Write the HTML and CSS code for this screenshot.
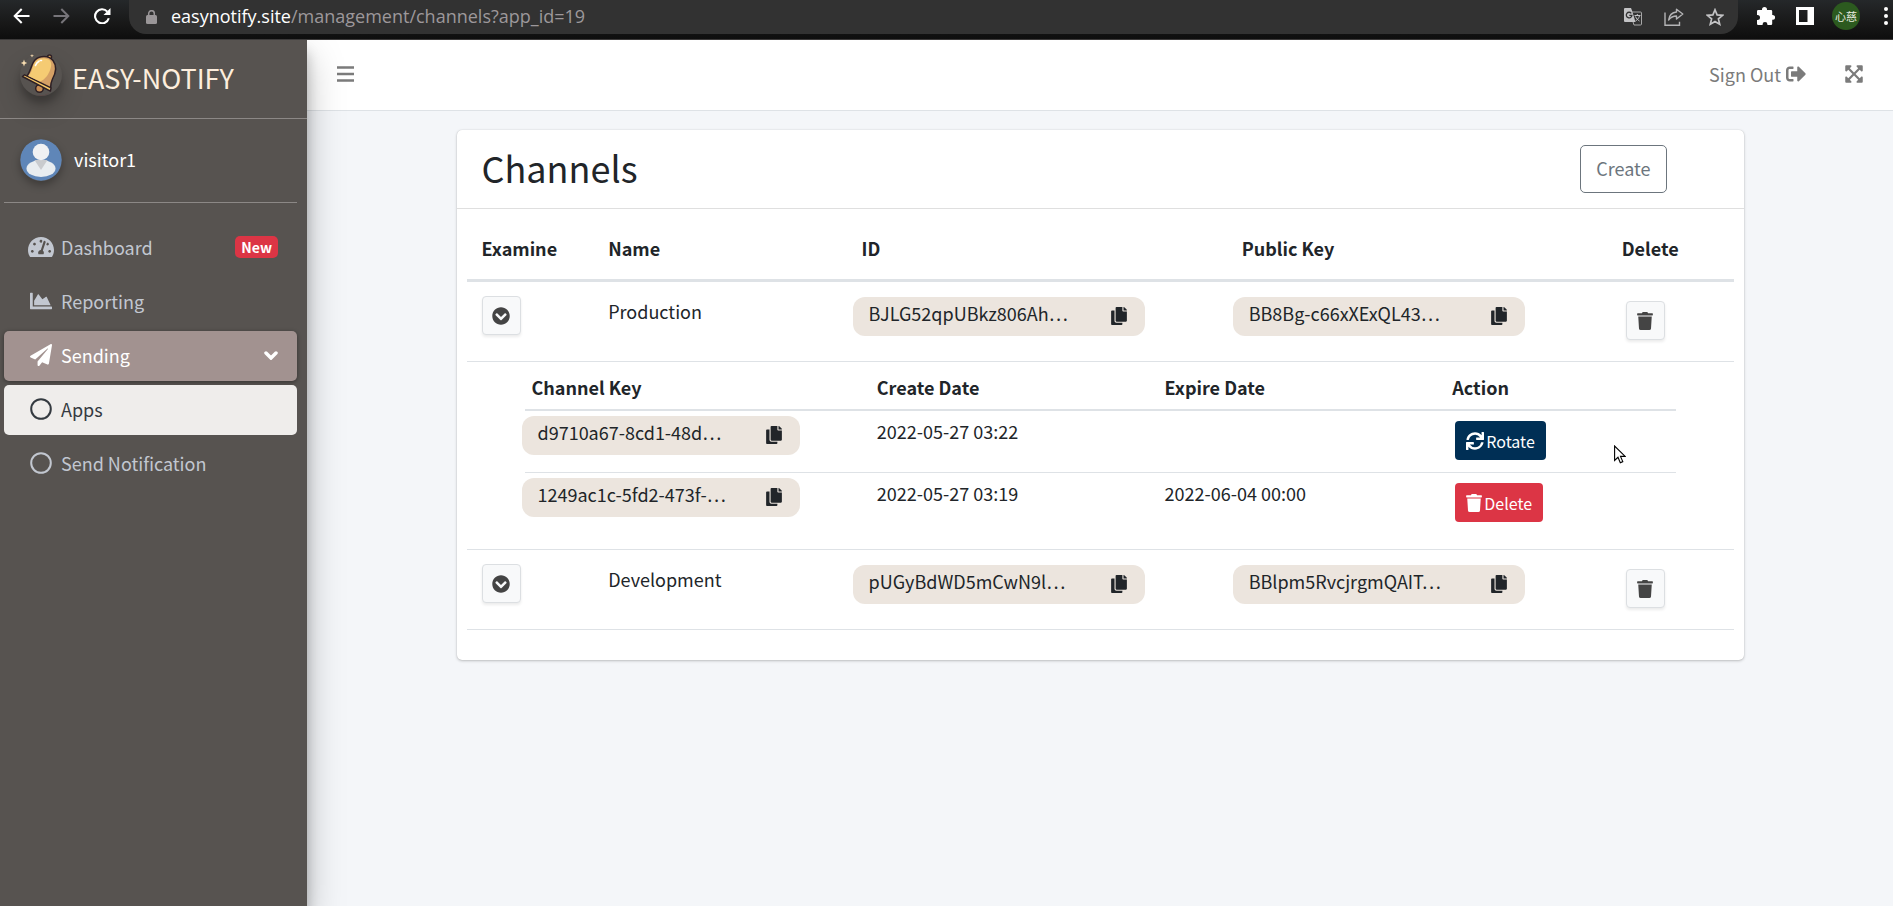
FILE: index.html
```html
<!DOCTYPE html>
<html lang="en">
<head>
<meta charset="utf-8">
<title>Channels - Easy-Notify</title>
<link rel="stylesheet" href="styles.css">
</head>
<body>
<svg class="sprite" aria-hidden="true">
  <symbol id="i-dash" viewBox="0 0 576 512"><path d="M288 32C128.94 32 0 160.94 0 320c0 52.8 14.25 102.26 39.06 144.8 5.61 9.62 16.3 15.2 27.44 15.2h443c11.14 0 21.83-5.58 27.44-15.2C561.75 422.26 576 372.8 576 320c0-159.06-128.94-288-288-288zm0 64c14.71 0 26.58 10.13 30.32 23.65-1.11 2.26-2.64 4.23-3.45 6.67l-9.22 27.67c-5.13 3.49-10.97 6.01-17.64 6.01-17.67 0-32-14.33-32-32S270.33 96 288 96zM96 384c-17.67 0-32-14.33-32-32s14.33-32 32-32 32 14.33 32 32-14.33 32-32 32zm48-160c-17.67 0-32-14.33-32-32s14.33-32 32-32 32 14.33 32 32-14.33 32-32 32zm246.77-72.41l-61.33 184C343.13 347.33 352 364.54 352 384c0 11.72-3.38 22.55-8.88 32H232.88c-5.5-9.45-8.88-20.28-8.88-32 0-33.94 26.5-61.43 59.9-63.59l61.34-184.01c4.17-12.56 17.73-19.45 30.36-15.17 12.57 4.19 19.35 17.79 15.17 30.36zm14.66 57.2l15.52-46.55c3.47-1.29 7.13-2.23 11.05-2.23 17.67 0 32 14.33 32 32s-14.33 32-32 32c-11.38-.01-20.89-6.28-26.57-15.22zM480 384c-17.67 0-32-14.33-32-32s14.33-32 32-32 32 14.33 32 32-14.33 32-32 32z"/></symbol>
  <symbol id="i-area" viewBox="0 0 512 512"><path d="M500 384c6.6 0 12 5.4 12 12v40c0 6.6-5.4 12-12 12H12c-6.6 0-12-5.4-12-12V76c0-6.6 5.4-12 12-12h40c6.6 0 12 5.4 12 12v308h436zM372.7 159.5L288 216l-85.3-113.7c-5.1-6.8-15.5-6.3-19.9 1L96 248v104h384l-89.9-187.8c-3.2-6.5-11.4-8.7-17.4-4.7z"/></symbol>
  <symbol id="i-plane" viewBox="0 0 512 512"><path d="M476 3.2L12.5 270.6c-18.1 10.4-15.8 35.6 2.2 43.2L121 358.4l287.3-253.2c5.5-4.9 13.3 2.6 8.6 8.3L176 407v80.5c0 23.6 28.5 32.9 42.5 15.8L282 426l124.6 52.2c14.2 6 30.4-2.9 33-18.2l72-432C515 7.8 493.3-6.8 476 3.2z"/></symbol>
  <symbol id="i-circle" viewBox="0 0 22 22"><circle cx="11" cy="11" r="9.8" fill="none" stroke="currentColor" stroke-width="2"/></symbol>
  <symbol id="i-down" viewBox="0 0 512 512"><path d="M504 256c0 137-111 248-248 248S8 393 8 256 119 8 256 8s248 111 248 248zM273 369.9l135.5-135.5c9.4-9.4 9.4-24.6 0-33.9l-17-17c-9.4-9.4-24.6-9.4-33.9 0L256 285.1 154.4 183.5c-9.4-9.4-24.6-9.4-33.9 0l-17 17c-9.4 9.4-9.4 24.6 0 33.9L239 369.9c9.4 9.4 24.6 9.4 34 0z"/></symbol>
  <symbol id="i-copy" viewBox="0 0 448 512"><path d="M320 448v40c0 13.255-10.745 24-24 24H24c-13.255 0-24-10.745-24-24V120c0-13.255 10.745-24 24-24h72v296c0 30.879 25.121 56 56 56h168zm0-344V0H152c-13.255 0-24 10.745-24 24v368c0 13.255 10.745 24 24 24h272c13.255 0 24-10.745 24-24V128H344c-13.2 0-24-10.8-24-24zm120.971-31.029L375.029 7.029A24 24 0 0 0 358.059 0H352v96h96v-6.059a24 24 0 0 0-7.029-16.97z"/></symbol>
  <symbol id="i-trash" viewBox="0 0 448 512"><path d="M432 32H312l-9.4-18.7A24 24 0 0 0 281.1 0H166.8a23.72 23.72 0 0 0-21.4 13.3L136 32H16A16 16 0 0 0 0 48v32a16 16 0 0 0 16 16h416a16 16 0 0 0 16-16V48a16 16 0 0 0-16-16zM53.2 467a48 48 0 0 0 47.9 45h245.8a48 48 0 0 0 47.9-45L416 128H32z"/></symbol>
  <symbol id="i-signout" viewBox="0 0 512 512"><path d="M497 273L329 441c-15 15-41 4.5-41-17v-96H152c-13.3 0-24-10.7-24-24v-96c0-13.3 10.7-24 24-24h136V88c0-21.4 25.9-32 41-17l168 168c9.3 9.4 9.3 24.6 0 34zM192 436v-40c0-6.6-5.4-12-12-12H96c-17.7 0-32-14.3-32-32V160c0-17.7 14.3-32 32-32h84c6.6 0 12-5.4 12-12V76c0-6.6-5.4-12-12-12H96c-53 0-96 43-96 96v192c0 53 43 96 96 96h84c6.6 0 12-5.4 12-12z"/></symbol>
  <symbol id="i-expand" viewBox="0 0 448 512"><path d="M448 344v112a23.94 23.94 0 0 1-24 24H312c-21.39 0-32.09-25.9-17-41l36.2-36.2L224 295.6 116.77 402.9 153 439c15.09 15.1 4.39 41-17 41H24a23.94 23.94 0 0 1-24-24V344c0-21.4 25.89-32.1 41-17l36.19 36.2L184.46 256 77.18 148.7 41 185c-15.1 15.1-41 4.4-41-17V56a23.94 23.94 0 0 1 24-24h112c21.39 0 32.09 25.9 17 41l-36.2 36.2L224 216.4l107.23-107.3L295 73c-15.09-15.1-4.39-41 17-41h112a23.94 23.94 0 0 1 24 24v112c0 21.4-25.89 32.1-41 17l-36.19-36.2L263.54 256l107.28 107.3L407 327.1c15.1-15.2 41-4.5 41 16.9z"/></symbol>
  <symbol id="i-sync" viewBox="0 0 512 512"><path d="M440.65 12.57l4 82.77A247.16 247.16 0 0 0 255.83 8C134.73 8 33.91 94.92 12.29 209.82A12 12 0 0 0 24.09 224h49.05a12 12 0 0 0 11.67-9.26 175.91 175.91 0 0 1 317-56.94l-101.46-4.86a12 12 0 0 0-12.57 12v47.41a12 12 0 0 0 12 12H500a12 12 0 0 0 12-12V12a12 12 0 0 0-12-12h-47.37a12 12 0 0 0-11.98 12.57zM255.83 432a175.61 175.61 0 0 1-146-77.8l101.8 4.87a12 12 0 0 0 12.57-12v-47.4a12 12 0 0 0-12-12H12a12 12 0 0 0-12 12V500a12 12 0 0 0 12 12h47.35a12 12 0 0 0 12-12.6l-4.15-82.57A247.17 247.17 0 0 0 255.83 504c121.11 0 221.93-86.92 243.55-201.82a12 12 0 0 0-11.8-14.18h-49.05a12 12 0 0 0-11.67 9.26A175.86 175.86 0 0 1 255.83 432z"/></symbol>
</svg>

<header class="chrome">
  <div class="chrome-nav">
    <button class="chrome-btn" aria-label="Back"><svg width="17" height="16" viewBox="0 0 17 16"><path d="M16.500 8H2M8.700 1L1.700 8l7 7" fill="none" stroke="#fff" stroke-width="2"/></svg></button>
    <button class="chrome-btn" aria-label="Forward"><svg width="17" height="16" viewBox="0 0 17 16"><path d="M.5 8H15M8.300 1l7 7-7 7" fill="none" stroke="#77757a" stroke-width="2"/></svg></button>
    <button class="chrome-btn" aria-label="Reload"><svg width="18" height="16" viewBox="0 0 18 16"><path d="M15.800 10.300A7 7 0 1 1 14.300 3.600" fill="none" stroke="#fff" stroke-width="2.100"/><path d="M17.500 0v7h-7z" fill="#fff"/></svg></button>
  </div>
  <div class="omnibox">
    <svg class="lock" width="11" height="14" viewBox="0 0 11 14"><rect y="5" width="11" height="9" rx="1.500" fill="#9a9698"/><path d="M2.700 6V3.500a2.800 2.800 0 0 1 5.600 0V6" fill="none" stroke="#9a9698" stroke-width="1.500"/></svg>
    <span class="url"><span class="host">easynotify.site</span>/management/channels?app_id=19</span>
    <div class="omni-icons">
      <svg width="18" height="18" viewBox="0 0 18 18"><path d="M6 4h10.500q1 0 1 1v11q0 1-1 1H10L6 4z" fill="none" stroke="#a8a8a8" stroke-width="1"/><path d="M1 0h6l1 2.500 3.500 11.500H1q-1 0-1-1V1q0-1 1-1z" fill="#c3c3c5"/><path d="M7.300 5.300A2.800 2.800 0 1 0 7.900 7.400H5.300" fill="none" stroke="#333" stroke-width="1.300"/><path d="M10.500 7.500h6M13.300 6v1.500M15.500 7.800c-.6 2.400-2 4-4 5.200M11.500 8.500c.8 2 2.200 3.500 4 4.500" fill="none" stroke="#c3c3c5" stroke-width="1"/></svg>
      <svg width="20" height="18" viewBox="0 0 20 18"><g fill="none" stroke="#b4b4b6" stroke-width="1.400"><path d="M1 4.500v12.800h14.500v-3.500"/><path d="M12.500 1.200L18.800 6l-6.300 5V8C8.500 8 6.500 9.500 4.600 12 5.200 7.500 8 4.500 12.500 4z" stroke-linejoin="round"/></g></svg>
      <svg width="18" height="18" viewBox="0 0 18 18"><path d="M9 1.800l2.100 5.100 5.500.4-4.200 3.600 1.300 5.300L9 13.400l-4.700 2.800 1.300-5.300L1.400 7.300l5.500-.4z" fill="none" stroke="#c3c3c5" stroke-width="1.700"/></svg>
    </div>
  </div>
  <div class="chrome-tools">
    <svg width="19" height="18" viewBox="0 0 19 18"><path d="M6 3V2.500a2.500 2.500 0 0 1 5 0V3h4q1.200 0 1.200 1.200V8h.5a2.300 2.300 0 0 1 0 4.800h-.5v3.900q0 1.200-1.200 1.200h-3.600v-.6a2.400 2.400 0 0 0-4.800 0v.6H2.200Q1 17.900 1 16.700v-3.600h.5a2.500 2.500 0 0 0 0-5H1V4.200Q1 3 2.200 3z" fill="#fff"/></svg>
    <svg width="18" height="18" viewBox="0 0 18 18"><path d="M0 0h18v18H0zM3 3v12h8.500V3z" fill="#fff" fill-rule="evenodd"/></svg>
    <span class="profile">心慈</span>
    <svg width="4" height="18" viewBox="0 0 4 18"><g fill="#fff"><circle cx="2" cy="2" r="2"/><circle cx="2" cy="9" r="2"/><circle cx="2" cy="16" r="2"/></g></svg>
  </div>
</header>

<div class="app">
  <aside class="sidebar">
    <a class="brand" href="#">
      <span class="brand-logo">
        <svg width="42" height="42" viewBox="0 0 42 42">
          <path d="M10 38.500Q21 44 31 38.500Q26 41.500 21 41.500T10 38.500z" fill="#6b2f33"/>
          <g stroke="#2e2025" stroke-width="1.500" stroke-linejoin="round">
            <circle cx="19.500" cy="34.500" r="3.800" fill="#c98f55"/>
            <circle cx="29.500" cy="3" r="2" fill="#e0a85a"/>
            <path d="M6.500 22.500C11 18 11 10 15 6 20 1 29 1.500 33 6.500c4.500 6 2.500 13-.5 18.500-1.500 3-2 5-2 9.500z" fill="#d5a065"/>
            <path d="M2.500 22.500l2-1.700 26.500 13-.6 3.300z" fill="#f6c767"/>
          </g>
          <path d="M8.500 22C12.500 18 12.500 10.500 16 7c4-4 11-3.500 14-.5 3 4 0 11-3 15.500-2.500 3-5 5-7 5.500z" fill="#f5cb73"/>
          <path d="M15.500 11.500q1-3 3.500-4.300M20.500 6.500h1" stroke="#fff" stroke-width="1.600" stroke-linecap="round" fill="none"/>
          <path d="M4 5.500l.9 2.600 2.300.9-2.300.9L4 12.500l-.9-2.600L.8 9l2.300-.9zM12 0l.5 1.200 1.500.5-1.500.5L12 3.500l-.5-1.300-1.500-.5 1.500-.5z" fill="#f7dcb0"/>
        </svg>
      </span>
      <span class="brand-text">EASY-NOTIFY</span>
    </a>
    <div class="user">
      <svg class="avatar" width="42" height="42" viewBox="0 0 42 42"><circle cx="21" cy="21" r="20.700" fill="#5f86b8"/><ellipse cx="21" cy="29.500" rx="14.500" ry="8.500" fill="#e9edf0"/><path d="M14.500 21h13L21 31z" fill="#c9cbce"/><circle cx="21" cy="13" r="8.300" fill="#f0f1f3"/></svg>
      <a class="user-name" href="#">visitor1</a>
    </div>
    <nav class="nav">
      <a class="nav-item" href="#"><svg class="nav-icon wide"><use href="#i-dash"/></svg><span>Dashboard</span><span class="badge">New</span></a>
      <a class="nav-item" href="#"><svg class="nav-icon"><use href="#i-area"/></svg><span>Reporting</span></a>
      <a class="nav-item open" href="#"><svg class="nav-icon"><use href="#i-plane"/></svg><span>Sending</span><svg class="caret" width="14" height="9" viewBox="0 0 14 9"><path d="M2 2l5 5 5-5" fill="none" stroke="currentColor" stroke-width="3.500" stroke-linecap="round"/></svg></a>
      <a class="nav-item current" href="#"><svg class="nav-icon"><use href="#i-circle"/></svg><span>Apps</span></a>
      <a class="nav-item" href="#"><svg class="nav-icon"><use href="#i-circle"/></svg><span>Send Notification</span></a>
    </nav>
  </aside>

  <div class="page">
    <div class="topbar">
      <button class="icon-btn" aria-label="Toggle menu"><svg width="17" height="16" viewBox="0 0 17 16"><path d="M0 1.500h17M0 8h17M0 14.500h17" stroke="currentColor" stroke-width="2.400"/></svg></button>
      <div class="topbar-right">
        <a class="signout" href="#">Sign Out <svg class="signout-icon"><use href="#i-signout"/></svg></a>
        <button class="icon-btn" aria-label="Full screen"><svg class="expand-icon"><use href="#i-expand"/></svg></button>
      </div>
    </div>

    <main class="content">
      <section class="card">
        <div class="card-header">
          <h1 class="title">Channels</h1>
          <button class="create">Create</button>
        </div>
        <div class="card-body">
          <table class="channels">
            <colgroup><col class="w10"><col class="w20"><col class="w30"><col class="w30"><col class="w10"></colgroup>
            <thead>
              <tr><th>Examine</th><th>Name</th><th>ID</th><th>Public Key</th><th>Delete</th></tr>
            </thead>
            <tbody>
              <tr class="channel">
                <td><button class="square" aria-label="Examine Production"><svg class="i18"><use href="#i-down"/></svg></button></td>
                <td>Production</td>
                <td class="key-cell"><div class="key"><span>BJLG52qpUBkz806Ah…</span><button class="copy" aria-label="Copy ID"><svg class="i16"><use href="#i-copy"/></svg></button></div></td>
                <td class="key-cell"><div class="key"><span>BB8Bg-c66xXExQL43…</span><button class="copy" aria-label="Copy public key"><svg class="i16"><use href="#i-copy"/></svg></button></div></td>
                <td class="delete-cell"><button class="square" aria-label="Delete Production"><svg class="i16"><use href="#i-trash"/></svg></button></td>
              </tr>
              <tr class="detail">
                <td colspan="5">
                  <table class="keys">
                    <colgroup><col class="w30"><col class="w25"><col class="w25"><col class="w20"></colgroup>
                    <thead>
                      <tr><th>Channel Key</th><th>Create Date</th><th>Expire Date</th><th>Action</th></tr>
                    </thead>
                    <tbody>
                      <tr>
                        <td><div class="key"><span>d9710a67-8cd1-48d…</span><button class="copy" aria-label="Copy key"><svg class="i16"><use href="#i-copy"/></svg></button></div></td>
                        <td>2022-05-27 03:22</td>
                        <td></td>
                        <td class="action"><button class="act rotate"><svg class="i18"><use href="#i-sync"/></svg>Rotate</button></td>
                      </tr>
                      <tr>
                        <td><div class="key"><span>1249ac1c-5fd2-473f-…</span><button class="copy" aria-label="Copy key"><svg class="i16"><use href="#i-copy"/></svg></button></div></td>
                        <td>2022-05-27 03:19</td>
                        <td>2022-06-04 00:00</td>
                        <td class="action"><button class="act danger"><svg class="i16"><use href="#i-trash"/></svg>Delete</button></td>
                      </tr>
                    </tbody>
                  </table>
                </td>
              </tr>
              <tr class="channel">
                <td><button class="square" aria-label="Examine Development"><svg class="i18"><use href="#i-down"/></svg></button></td>
                <td>Development</td>
                <td class="key-cell"><div class="key"><span>pUGyBdWD5mCwN9l…</span><button class="copy" aria-label="Copy ID"><svg class="i16"><use href="#i-copy"/></svg></button></div></td>
                <td class="key-cell"><div class="key"><span>BBlpm5RvcjrgmQAIT…</span><button class="copy" aria-label="Copy public key"><svg class="i16"><use href="#i-copy"/></svg></button></div></td>
                <td class="delete-cell"><button class="square" aria-label="Delete Development"><svg class="i16"><use href="#i-trash"/></svg></button></td>
              </tr>
            </tbody>
          </table>
        </div>
      </section>
    </main>
  </div>
</div>
<svg class="pointer" width="12" height="19" viewBox="0 0 12 19"><path d="M.6 1v14.500l3.400-3.200 2.300 5.400 2.500-1.100-2.300-5.200h4.700z" fill="#fff" stroke="#000" stroke-width="1.100"/></svg>
</body>
</html>
```

FILE: styles.css
```css
* { box-sizing: border-box; }

body {
  margin: 0;
  min-height: 100vh;
  display: flex;
  flex-direction: column;
  background: #f4f6f9;
  color: #212529;
  font: 18px/30px "Noto Sans CJK SC", "Noto Sans", sans-serif;
}

a { color: inherit; text-decoration: none; }
button { font: inherit; color: inherit; cursor: pointer; }
svg { display: block; flex: none; fill: currentColor; }
.sprite { position: absolute; width: 0; height: 0; }

/* Browser toolbar */
.chrome {
  display: flex;
  align-items: flex-start;
  height: 40px;
  background: linear-gradient(#25282a, #181818 60%, #0e0e0e);
  border-bottom: 1px solid #3c3a3a;
}
.chrome-nav { display: flex; flex: none; gap: 23px; width: 129px; padding: 8px 0 0 13px; }
.chrome-btn { padding: 0; border: 0; background: none; }
.omnibox {
  flex: 1;
  display: flex;
  align-items: center;
  height: 34px;
  padding: 0 14px 0 17px;
  border-radius: 0 0 17px 17px;
  background: #323232;
}
.lock { margin-right: 14px; }
.url { flex: 1; padding-bottom: 2px; font: 18px/24px "Open Sans", sans-serif; color: #9d989b; }
.host { color: #fff; }
.omni-icons { display: flex; align-items: center; gap: 22px; }
.chrome-tools { display: flex; align-items: center; gap: 21px; height: 32px; padding: 0 5px 0 18px; }
.profile {
  width: 28px;
  height: 28px;
  margin: 0 3px 0 -3px;
  border-radius: 50%;
  background: #2c5a1f;
  color: #e6eadf;
  font-size: 11px;
  line-height: 28px;
  text-align: center;
}

/* Shell */
.app { flex: 1; display: flex; }
.sidebar {
  width: 307px;
  flex: none;
  z-index: 1;
  background: #575350;
  color: #c2c7d0;
  box-shadow: 0 17px 35px rgba(0, 0, 0, .25), 0 12px 12px rgba(0, 0, 0, .22);
  clip-path: inset(0 -60px 0 0);
}
.page { flex: 1; min-width: 0; }

.brand {
  display: flex;
  align-items: center;
  gap: 10px;
  height: 79px;
  padding: 0 20px;
  border-bottom: 1px solid #8c8886;
  color: #fdeedd;
  font-size: 27px;
}
.brand-logo { margin-bottom: 8px; border-radius: 50%; box-shadow: 0 12px 24px rgba(0, 0, 0, .2), 0 7px 7px rgba(0, 0, 0, .2); }
.brand-text { padding-bottom: 2px; }
.user {
  display: flex;
  align-items: center;
  gap: 12px;
  height: 84px;
  margin: 0 10px 0 4px;
  padding: 0 16px 2px;
  border-bottom: 1px solid #8c8886;
  color: #fff;
}
.user-name { padding-bottom: 2px; }
.avatar { border-radius: 50%; box-shadow: 0 4px 8px rgba(0, 0, 0, .3); }

.nav { display: flex; flex-direction: column; gap: 4px; padding: 20px 10px 0 4px; }
.nav-item {
  display: flex;
  align-items: center;
  gap: 7px;
  height: 50px;
  padding: 0 19px 2px 24px;
  border-radius: 5px;
}
.nav-icon { width: 26px; height: 22px; }
.nav-icon.wide { height: 24px; }
.nav-item.open { background: #a29290; color: #fff; box-shadow: 0 1px 4px rgba(0, 0, 0, .4); }
.nav-item.current { background: #efedeb; color: #343a40; }
.badge {
  margin-left: auto;
  padding: 0 6px;
  border-radius: 5px;
  background: #dc3545;
  color: #fff;
  font-size: 14px;
  font-weight: 700;
  line-height: 22px;
}
.caret { margin-left: auto; }

.topbar {
  display: flex;
  align-items: center;
  justify-content: space-between;
  height: 71px;
  padding: 0 30px 2px;
  border-bottom: 1px solid #dee2e6;
  background: #fff;
  color: #7b7b7b;
}
.topbar-right { display: flex; align-items: center; gap: 39px; }
.icon-btn { padding: 0; border: 0; background: none; }
.signout { display: flex; align-items: center; gap: 5px; }
.signout-icon { width: 20px; height: 20px; }
.expand-icon { width: 18px; height: 20px; }

/* Card */
.content { padding: 19px 20px; }
.card {
  max-width: 1287px;
  margin: 0 auto;
  border-radius: 5px;
  background: #fff;
  box-shadow: 0 0 1px rgba(0, 0, 0, .2), 0 1px 3px rgba(0, 0, 0, .22);
}
.card-header {
  display: flex;
  align-items: flex-start;
  justify-content: space-between;
  padding: 15px 77px 15px 25px;
  border-bottom: 1px solid #dfdfdf;
}
.title { margin: 0; font-size: 36px; font-weight: 400; line-height: 44px; }
.create {
  height: 48px;
  padding: 0 15px 2px;
  border: 1px solid #6c757d;
  border-radius: 5px;
  background: none;
  color: #6c757d;
}
.card-body { padding: 10px 10px 30px; }

table { width: 100%; table-layout: fixed; border-collapse: separate; border-spacing: 0; }
th { text-align: left; font-weight: 700; }
td { vertical-align: top; }
.w10 { width: 10%; }
.w20 { width: 20%; }
.w25 { width: 25%; }
.w30 { width: 30%; }

.channels > thead th { padding: 14px 15px 16px; border-bottom: 3px solid #dee2e6; }
.channel > td { height: 80px; padding: 14px 15px; border-bottom: 1px solid #dee2e6; }
.channel > .key-cell { padding: 15px 82px 0 6px; }
.channel > .delete-cell { padding: 19px; }
.detail > td { padding: 4px 58px 15px; border-bottom: 1px solid #dee2e6; }

.keys th { padding: 6px 7px 7px; border-bottom: 2px solid #dee2e6; }
.keys td { padding: 5px 7px; }
.keys tr + tr td { border-top: 1px solid #dee2e6; }
.keys td:first-child { padding: 5px 70px 5px 0; }
.keys .action { padding: 10px 10px 12px; }

.key {
  display: flex;
  align-items: flex-start;
  justify-content: space-between;
  height: 39px;
  padding: 1px 18px 0 16px;
  border-radius: 12px;
  background: #ece5de;
}
.keys .key { margin-left: -3px; }
.key span { white-space: nowrap; }
.copy { padding: 9px 0 0; border: 0; background: none; }
.i16 { width: 16px; height: 18px; }
.i18 { width: 18px; height: 18px; }

.square {
  display: grid;
  place-items: center;
  width: 39px;
  height: 39px;
  padding: 0;
  border: 1px solid #dcdfe2;
  border-radius: 4px;
  background: #f8f9fa;
  color: #444;
  box-shadow: 0 2px 3px rgba(0, 0, 0, .08);
}
.act {
  display: flex;
  align-items: center;
  gap: 2px;
  height: 39px;
  padding: 0 11px;
  border: 0;
  border-radius: 4px;
  color: #fff;
  font-size: 16px;
}
.rotate { background: #002f55; }
.danger { background: #dc3545; }

.pointer { position: absolute; left: 1614px; top: 445px; }
```
